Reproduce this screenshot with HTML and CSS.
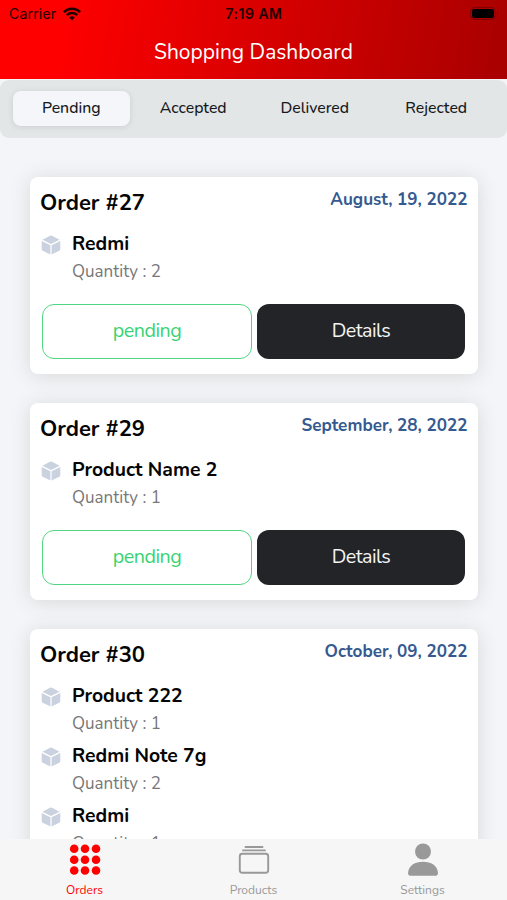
FILE: index.html
```html
<!DOCTYPE html>
<html lang="en">
<head>
    <meta charset="UTF-8">
    <meta name="viewport" content="width=device-width, initial-scale=1.0">
    <title>Shopping Dashboard</title>
    <link rel="stylesheet" href="styles.css">
</head>
<body>
    <svg class="symbols">
        <symbol id="cube" viewBox="0 0 20 20">
            <path d="M9 .8Q10 .3 11 .8L18.600 4.700 10 9 1.400 4.700Z"/>
            <path d="M.7 6 9.400 10.300v9.200L1.800 15.700Q.7 15.200.7 14.200Z"/>
            <path d="M19.300 6 10.600 10.300v9.200l7.600-3.800q1.100-.5 1.100-1.500Z"/>
        </symbol>
    </svg>

    <header class="header">
        <div class="status-bar">
            <div class="carrier">
                <span>Carrier</span>
                <svg width="18" height="14" viewBox="0 0 18 14" fill="none" stroke="#220000" stroke-width="2.4">
                    <path d="M.9 5.100a11.500 11.500 0 0 1 16.200 0"/>
                    <path d="M3.800 8.100a7.400 7.400 0 0 1 10.400 0"/>
                    <path d="M9 13.400 6.200 10.500a4 4 0 0 1 5.600 0Z" fill="#220000" stroke="none"/>
                </svg>
            </div>
            <span class="time">7:19 AM</span>
            <svg class="battery" width="29" height="13" viewBox="0 0 29 13">
                <rect x=".6" y=".6" width="24.800" height="11.800" rx="3.500" fill="none" stroke="#5c0000" stroke-opacity=".6"/>
                <rect x="2" y="2" width="22" height="9" rx="2.200"/>
                <path d="M27 4.500q1.600 2 0 4Z" fill="#6a0000"/>
            </svg>
        </div>
        <h1>Shopping Dashboard</h1>
    </header>

    <nav class="tabs">
        <button class="tab active">Pending</button>
        <button class="tab">Accepted</button>
        <button class="tab">Delivered</button>
        <button class="tab">Rejected</button>
    </nav>

    <main class="orders">
        <section class="card">
            <div class="card-top">
                <h2>Order #27</h2>
                <span class="date">August, 19, 2022</span>
            </div>
            <div class="item">
                <svg class="cube"><use href="#cube"/></svg>
                <div>
                    <h3>Redmi</h3>
                    <p>Quantity : 2</p>
                </div>
            </div>
            <div class="actions">
                <button class="btn btn-status">pending</button>
                <button class="btn btn-details">Details</button>
            </div>
        </section>

        <section class="card">
            <div class="card-top">
                <h2>Order #29</h2>
                <span class="date">September, 28, 2022</span>
            </div>
            <div class="item">
                <svg class="cube"><use href="#cube"/></svg>
                <div>
                    <h3>Product Name 2</h3>
                    <p>Quantity : 1</p>
                </div>
            </div>
            <div class="actions">
                <button class="btn btn-status">pending</button>
                <button class="btn btn-details">Details</button>
            </div>
        </section>

        <section class="card">
            <div class="card-top">
                <h2>Order #30</h2>
                <span class="date">October, 09, 2022</span>
            </div>
            <div class="item">
                <svg class="cube"><use href="#cube"/></svg>
                <div>
                    <h3>Product 222</h3>
                    <p>Quantity : 1</p>
                </div>
            </div>
            <div class="item">
                <svg class="cube"><use href="#cube"/></svg>
                <div>
                    <h3>Redmi Note 7g</h3>
                    <p>Quantity : 2</p>
                </div>
            </div>
            <div class="item">
                <svg class="cube"><use href="#cube"/></svg>
                <div>
                    <h3>Redmi</h3>
                    <p>Quantity : 1</p>
                </div>
            </div>
        </section>
    </main>

    <footer class="bottom-nav">
        <a class="nav-item active">
            <svg width="32" height="32" viewBox="0 0 32 32" fill="currentColor">
                <circle cx="5.200" cy="5.800" r="4.300"/><circle cx="16" cy="5.800" r="4.300"/><circle cx="27" cy="5.800" r="4.300"/>
                <circle cx="5.200" cy="16.700" r="4.300"/><circle cx="16" cy="16.700" r="4.300"/><circle cx="27" cy="16.700" r="4.300"/>
                <circle cx="5.200" cy="27.500" r="4.300"/><circle cx="16" cy="27.500" r="4.300"/><circle cx="27" cy="27.500" r="4.300"/>
            </svg>
            <span>Orders</span>
        </a>
        <a class="nav-item">
            <svg width="32" height="32" viewBox="0 0 32 32" fill="none" stroke="currentColor" stroke-width="1.900" stroke-linecap="round">
                <path d="M7.500 4h17M5 7.400h22"/>
                <rect x="1.800" y="10.700" width="28.400" height="19" rx="2.500"/>
            </svg>
            <span>Products</span>
        </a>
        <a class="nav-item">
            <svg width="32" height="34" viewBox="0 0 32 34" fill="currentColor">
                <circle cx="16" cy="8.500" r="8"/>
                <path d="M1 30C1.500 22.500 8 18.700 16 18.700S30.500 22.500 31 30Q31 32.700 29 32.700H3Q1 32.700 1 30Z"/>
            </svg>
            <span>Settings</span>
        </a>
    </footer>
</body>
</html>
```
FILE: styles.css
```css
* {
    box-sizing: border-box;
}

body {
    margin: 0;
    height: 100vh;
    overflow: hidden;
    display: flex;
    flex-direction: column;
    font-family: Nunito, "Noto Sans", sans-serif;
    background-color: #f3f5f9;
    color: #050505;
}

h1, h2, h3, p {
    margin: 0;
}

button {
    font-family: inherit;
    padding: 0;
    border: none;
    white-space: nowrap;
}

.symbols {
    display: none;
}

/* Header */
.header {
    flex: none;
    height: 79px;
    background: linear-gradient(100deg, #ff0000 12%, #a80000 100%);
}

.status-bar {
    height: 27px;
    padding: 0 8px 0 9px;
    display: grid;
    grid-template-columns: 1fr auto 1fr;
    align-items: center;
    font-family: Inter, sans-serif;
    font-size: 14px;
    color: #220000;
}

.carrier {
    display: flex;
    align-items: center;
    gap: 7px;
    letter-spacing: 0.2px;
}

.time {
    font-weight: 600;
    font-size: 14px;
    letter-spacing: 0.5px;
}

.battery {
    justify-self: end;
}

.header h1 {
    height: 52px;
    line-height: 51px;
    text-align: center;
    font-size: 21px;
    font-weight: 400;
    color: #fff;
}

/* Status tabs */
.tabs {
    flex: none;
    display: flex;
    height: 58px;
    margin-top: 1px;
    padding: 11px 10px 12px;
    background-color: #e3e6e7;
    border-radius: 9px;
}

.tab {
    flex: 1;
    margin: 0 2px;
    padding-bottom: 1px;
    font-size: 15.8px;
    font-weight: 500;
    color: #17191c;
    background: none;
    border-radius: 8px;
}

.tab.active {
    margin: 0 2.5px;
    background-color: #f4f6fa;
    box-shadow: 0 1px 6px rgba(0, 0, 0, 0.1);
}

/* Orders */
.orders {
    flex: 1;
    min-height: 0;
    overflow: hidden;
    padding: 39px 29.5px 0 30px;
}

.card {
    padding: 10px 10px 15px;
    margin-bottom: 29px;
    background-color: #fff;
    border-radius: 8px;
    box-shadow: 0 2px 20px rgba(60, 60, 30, 0.15);
}

.card-top {
    display: flex;
    justify-content: space-between;
    height: 42px;
}

.card h2 {
    font-size: 22px;
    line-height: 32px;
    font-weight: 700;
}

.date {
    font-size: 17.1px;
    line-height: 25px;
    font-weight: 700;
    color: #345a90;
}

.item {
    display: flex;
    gap: 11px;
    height: 60px;
}

.cube {
    width: 20px;
    height: 20px;
    margin: 6px 0 0 1px;
    fill: #cad2df;
}

.item h3 {
    font-size: 19.4px;
    line-height: 30px;
    font-weight: 700;
}

.item p {
    font-size: 17px;
    line-height: 25px;
    color: #777;
}

.actions {
    display: flex;
    gap: 5px;
    padding: 15px 2.5px 0 2px;
}

.btn {
    flex: 1;
    height: 54.9px;
    padding-bottom: 1px;
    border-radius: 12px;
    font-size: 19.7px;
    letter-spacing: -0.5px;
}

.btn-status {
    background-color: #fff;
    border: 1.5px solid #52d583;
    color: #38d373;
}

.btn-details {
    background-color: #222428;
    color: #f4f4f4;
}

/* Bottom navigation */
.bottom-nav {
    flex: none;
    height: 61px;
    display: flex;
    background-color: #f6f6f6;
}

.nav-item {
    flex: 1;
    display: flex;
    flex-direction: column;
    align-items: center;
    justify-content: space-between;
    padding: 4px 0 1px;
    font-size: 12px;
    line-height: 17px;
    color: #999;
}

.nav-item.active {
    color: #ff0000;
}
```
